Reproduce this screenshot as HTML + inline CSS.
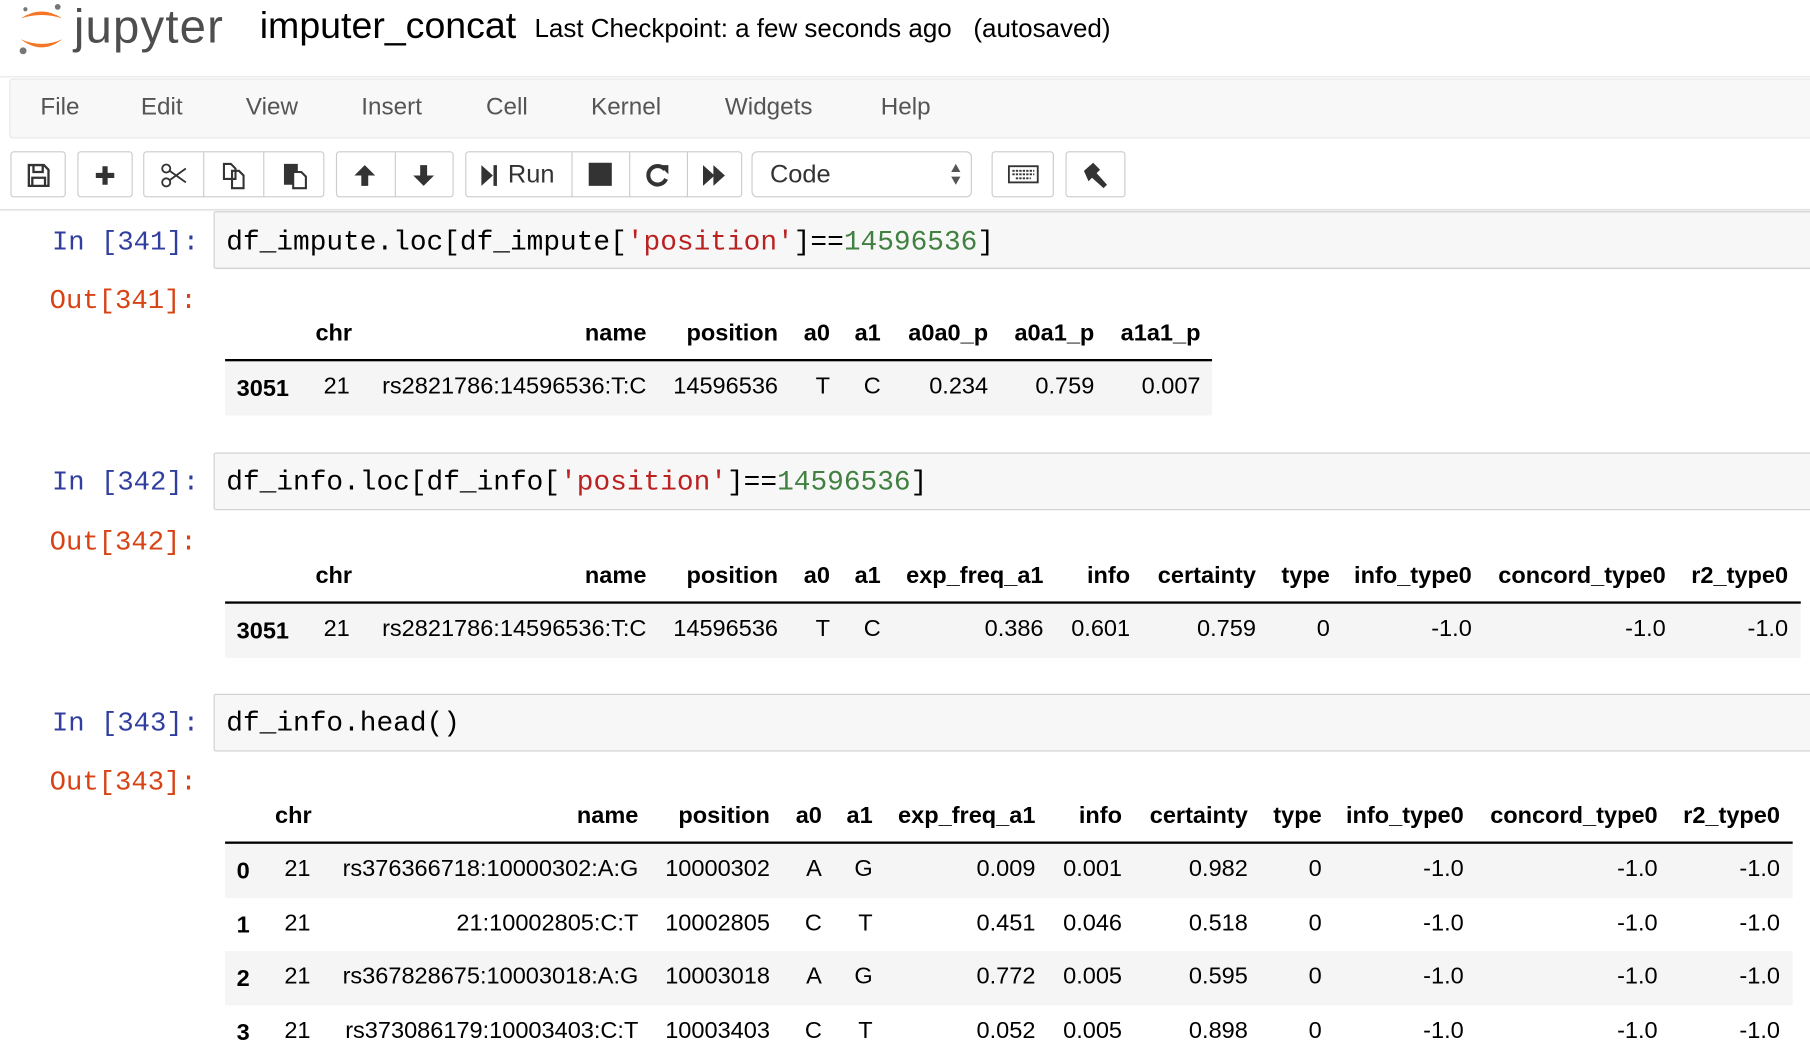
<!DOCTYPE html>
<html><head><meta charset="utf-8">
<style>
html,body{margin:0;padding:0;width:1810px;height:1053px;overflow:hidden;background:#fff}
#w{position:absolute;left:0;top:0;width:1568px;height:912px;transform:scale(1.15434);transform-origin:0 0;font-family:"Liberation Sans",Arial,sans-serif;color:#000}
.a{position:absolute;white-space:nowrap}
.menu span{position:absolute;top:81px;font-size:21px;color:#555}
.btn{position:absolute;top:131px;height:40px;border:1px solid #ccc;border-radius:3px;background:#fff;box-sizing:border-box}
.sep{position:absolute;top:132px;height:39px;width:1px;background:#ccc}
.ic{position:absolute}
.in{position:absolute;left:185px;right:-5px;height:50px;background:#f7f7f7;border:1px solid #cfcfcf;border-radius:2px;box-sizing:border-box}
.code{position:absolute;left:196px;font-family:"Liberation Mono",monospace;font-size:24.1px;white-space:pre}
.pi{position:absolute;left:45px;font-family:"Liberation Mono",monospace;font-size:23.6px;color:#303F9F;white-space:pre}
.po{position:absolute;left:43px;font-family:"Liberation Mono",monospace;font-size:23.6px;color:#D84315;white-space:pre}
.s{color:#BA2121}.n{color:#408040}
.r{position:absolute;left:0;height:24px;font-size:20.4px}
.r span{position:absolute;top:0;left:0;text-align:right;white-space:nowrap}
.r b.ix{position:absolute;left:205px;top:2px}
.h span{font-weight:bold}
.bg{position:absolute;background:#f5f5f5}
.ln{position:absolute;height:2px;background:#000}
</style></head><body><div id="w">
<!-- header -->
<svg class="ic" style="left:14px;top:2px" width="44" height="48" viewBox="0 0 44 48">
<path d="M4 14 Q22 2 40 14 Q22 8 4 14Z" fill="#F37726"/>
<path d="M4 32 Q22 46 40 32 Q22 40 4 32Z" fill="#F37726"/>
<circle cx="36" cy="4" r="2.5" fill="#767677"/><circle cx="6" cy="42" r="3" fill="#767677"/><circle cx="8" cy="6" r="1.8" fill="#767677"/>
</svg>
<div class="a" style="left:64px;top:0px;font-size:41px;color:#4e4e4e;letter-spacing:1px">jupyter</div>
<div class="a" style="left:225px;top:4px;font-size:32.5px">imputer_concat</div>
<div class="a" style="left:463px;top:12px;font-size:22.5px">Last Checkpoint: a few seconds ago&nbsp;&nbsp;&nbsp;(autosaved)</div>
<div class="a" style="left:0;right:0;top:66px;height:1px;background:#e7e7e7"></div>
<div class="a" style="left:8px;right:-5px;top:68px;height:52px;background:#f8f8f8;border:1px solid #e7e7e7;border-radius:3px;box-sizing:border-box"></div>
<div class="menu"><span style="left:35px">File</span><span style="left:122px">Edit</span><span style="left:213px">View</span><span style="left:313px">Insert</span><span style="left:421px">Cell</span><span style="left:512px">Kernel</span><span style="left:628px">Widgets</span><span style="left:763px">Help</span></div>
<!-- toolbar -->
<div class="btn" style="left:9px;width:48px"></div>
<div class="btn" style="left:67px;width:48px"></div>
<div class="btn" style="left:124px;width:157px"></div><div class="sep" style="left:176px"></div><div class="sep" style="left:228px"></div>
<div class="btn" style="left:291px;width:102px"></div><div class="sep" style="left:342px"></div>
<div class="btn" style="left:403px;width:240px"></div><div class="sep" style="left:495px"></div><div class="sep" style="left:545px"></div><div class="sep" style="left:595px"></div>
<div class="btn" style="left:651px;width:191px;border-radius:5px"></div>
<div class="btn" style="left:859px;width:54px"></div>
<div class="btn" style="left:923px;width:52px"></div>
<svg class="ic" style="left:22px;top:141px" width="22" height="22" viewBox="0 0 22 22"><path d="M3 2h13l4 4v14H3z M7 2v6h8V2 M6 13h11v7H6z" fill="none" stroke="#333" stroke-width="2"/></svg>
<svg class="ic" style="left:80px;top:141px" width="22" height="22"><path d="M11 3v16M3 11h16" stroke="#333" stroke-width="4.5"/></svg>
<svg class="ic" style="left:139px;top:141px" width="24" height="22"><circle cx="5" cy="5" r="3.5" fill="none" stroke="#333" stroke-width="1.6"/><circle cx="5" cy="17" r="3.5" fill="none" stroke="#333" stroke-width="1.6"/><path d="M8 7l14 10M8 15l14-10" stroke="#333" stroke-width="1.6"/></svg>
<svg class="ic" style="left:191px;top:139px" width="24" height="26"><path d="M3 3h6l4 4v9H3z M10 9h6l4 4v11H10z" fill="#fff" stroke="#333" stroke-width="1.8"/></svg>
<svg class="ic" style="left:243px;top:139px" width="24" height="26"><path d="M3 3h12v18H3z" fill="#333"/><path d="M11 10h7l4 4v10H11z" fill="#fff" stroke="#333" stroke-width="1.8"/></svg>
<svg class="ic" style="left:305px;top:141px" width="22" height="22"><path d="M11 2L2 11h6v9h6v-9h6z" fill="#333"/></svg>
<svg class="ic" style="left:356px;top:141px" width="22" height="22"><path d="M11 20L2 11h6V2h6v9h6z" fill="#333"/></svg>
<svg class="ic" style="left:415px;top:141px" width="18" height="22"><path d="M2 2l10 9-10 9z" fill="#333"/><path d="M14 2v18" stroke="#333" stroke-width="3"/></svg>
<div class="a" style="left:440px;top:138px;font-size:22px;color:#333">Run</div>
<div class="a" style="left:510px;top:141px;width:20px;height:20px;background:#333"></div>
<svg class="ic" style="left:558px;top:140px" width="24" height="24"><path d="M18 7A8 8 0 1 0 19 15" fill="none" stroke="#333" stroke-width="3.5"/><path d="M13 3h8v8z" fill="#333"/></svg>
<svg class="ic" style="left:607px;top:141px" width="24" height="22"><path d="M2 2l10 9-10 9zM11 2l10 9-10 9z" fill="#333"/></svg>
<div class="a" style="left:667px;top:138px;font-size:22px;color:#333">Code</div>
<svg class="ic" style="left:822px;top:140px" width="12" height="22"><path d="M6 2l4 7H2zM6 20l4-7H2z" fill="#555"/></svg>
<svg class="ic" style="left:873px;top:142px" width="28" height="18"><rect x="1" y="2" width="25" height="14" fill="none" stroke="#333" stroke-width="1.6"/><path d="M4 6h19M4 9h19M7 12.5h13" stroke="#333" stroke-width="1.6" stroke-dasharray="2 1"/></svg>
<svg class="ic" style="left:936px;top:139px" width="26" height="26"><path d="M3 9l8-7 6 6-3 3 9 10-3 3-10-9-3 3z" fill="#333"/></svg>
<div class="a" style="left:0;right:0;top:181px;height:2px;background:linear-gradient(#ddd,#f4f4f4)"></div>

<!-- cell 1 -->
<div class="in" style="top:183px"></div>
<div class="pi" style="top:197px">In [341]:</div>
<div class="code" style="top:197px">df_impute.loc[df_impute[<span class="s">'position'</span>]==<span class="n">14596536</span>]</div>
<div class="po" style="top:248px">Out[341]:</div>
<div class="bg" style="left:195px;top:313px;width:855px;height:47px"></div>
<div class="ln" style="left:195px;top:311px;width:855px"></div>
<div class="r h" style="top:278px"><span style="width:305px">chr</span><span style="width:560px">name</span><span style="width:674px">position</span><span style="width:719px">a0</span><span style="width:763px">a1</span><span style="width:856px">a0a0_p</span><span style="width:948px">a0a1_p</span><span style="width:1040px">a1a1_p</span></div>
<div class="r" style="top:324px"><b class="ix">3051</b><span style="width:303px">21</span><span style="width:560px">rs2821786:14596536:T:C</span><span style="width:674px">14596536</span><span style="width:719px">T</span><span style="width:763px">C</span><span style="width:856px">0.234</span><span style="width:948px">0.759</span><span style="width:1040px">0.007</span></div>

<!-- cell 2 -->
<div class="in" style="top:392px"></div>
<div class="pi" style="top:405px">In [342]:</div>
<div class="code" style="top:405px">df_info.loc[df_info[<span class="s">'position'</span>]==<span class="n">14596536</span>]</div>
<div class="po" style="top:457px">Out[342]:</div>
<div class="bg" style="left:195px;top:523px;width:1365px;height:47px"></div>
<div class="ln" style="left:195px;top:521px;width:1365px"></div>
<div class="r h" style="top:488px"><span style="width:305px">chr</span><span style="width:560px">name</span><span style="width:674px">position</span><span style="width:719px">a0</span><span style="width:763px">a1</span><span style="width:904px">exp_freq_a1</span><span style="width:979px">info</span><span style="width:1088px">certainty</span><span style="width:1152px">type</span><span style="width:1275px">info_type0</span><span style="width:1443px">concord_type0</span><span style="width:1549px">r2_type0</span></div>
<div class="r" style="top:534px"><b class="ix">3051</b><span style="width:303px">21</span><span style="width:560px">rs2821786:14596536:T:C</span><span style="width:674px">14596536</span><span style="width:719px">T</span><span style="width:763px">C</span><span style="width:904px">0.386</span><span style="width:979px">0.601</span><span style="width:1088px">0.759</span><span style="width:1152px">0</span><span style="width:1275px">-1.0</span><span style="width:1443px">-1.0</span><span style="width:1549px">-1.0</span></div>

<!-- cell 3 -->
<div class="in" style="top:601px"></div>
<div class="pi" style="top:614px">In [343]:</div>
<div class="code" style="top:614px">df_info.head()</div>
<div class="po" style="top:665px">Out[343]:</div>
<div class="bg" style="left:195px;top:731px;width:1358px;height:47px"></div>
<div class="bg" style="left:195px;top:824px;width:1358px;height:47px"></div>
<div class="ln" style="left:195px;top:729px;width:1358px"></div>
<div class="r h" style="top:696px"><span style="width:270px">chr</span><span style="width:553px">name</span><span style="width:667px">position</span><span style="width:712px">a0</span><span style="width:756px">a1</span><span style="width:897px">exp_freq_a1</span><span style="width:972px">info</span><span style="width:1081px">certainty</span><span style="width:1145px">type</span><span style="width:1268px">info_type0</span><span style="width:1436px">concord_type0</span><span style="width:1542px">r2_type0</span></div>
<div class="r" style="top:742px"><b class="ix">0</b><span style="width:269px">21</span><span style="width:553px">rs376366718:10000302:A:G</span><span style="width:667px">10000302</span><span style="width:712px">A</span><span style="width:756px">G</span><span style="width:897px">0.009</span><span style="width:972px">0.001</span><span style="width:1081px">0.982</span><span style="width:1145px">0</span><span style="width:1268px">-1.0</span><span style="width:1436px">-1.0</span><span style="width:1542px">-1.0</span></div>
<div class="r" style="top:789px"><b class="ix">1</b><span style="width:269px">21</span><span style="width:553px">21:10002805:C:T</span><span style="width:667px">10002805</span><span style="width:712px">C</span><span style="width:756px">T</span><span style="width:897px">0.451</span><span style="width:972px">0.046</span><span style="width:1081px">0.518</span><span style="width:1145px">0</span><span style="width:1268px">-1.0</span><span style="width:1436px">-1.0</span><span style="width:1542px">-1.0</span></div>
<div class="r" style="top:835px"><b class="ix">2</b><span style="width:269px">21</span><span style="width:553px">rs367828675:10003018:A:G</span><span style="width:667px">10003018</span><span style="width:712px">A</span><span style="width:756px">G</span><span style="width:897px">0.772</span><span style="width:972px">0.005</span><span style="width:1081px">0.595</span><span style="width:1145px">0</span><span style="width:1268px">-1.0</span><span style="width:1436px">-1.0</span><span style="width:1542px">-1.0</span></div>
<div class="r" style="top:882px"><b class="ix">3</b><span style="width:269px">21</span><span style="width:553px">rs373086179:10003403:C:T</span><span style="width:667px">10003403</span><span style="width:712px">C</span><span style="width:756px">T</span><span style="width:897px">0.052</span><span style="width:972px">0.005</span><span style="width:1081px">0.898</span><span style="width:1145px">0</span><span style="width:1268px">-1.0</span><span style="width:1436px">-1.0</span><span style="width:1542px">-1.0</span></div>
</div></body></html>
